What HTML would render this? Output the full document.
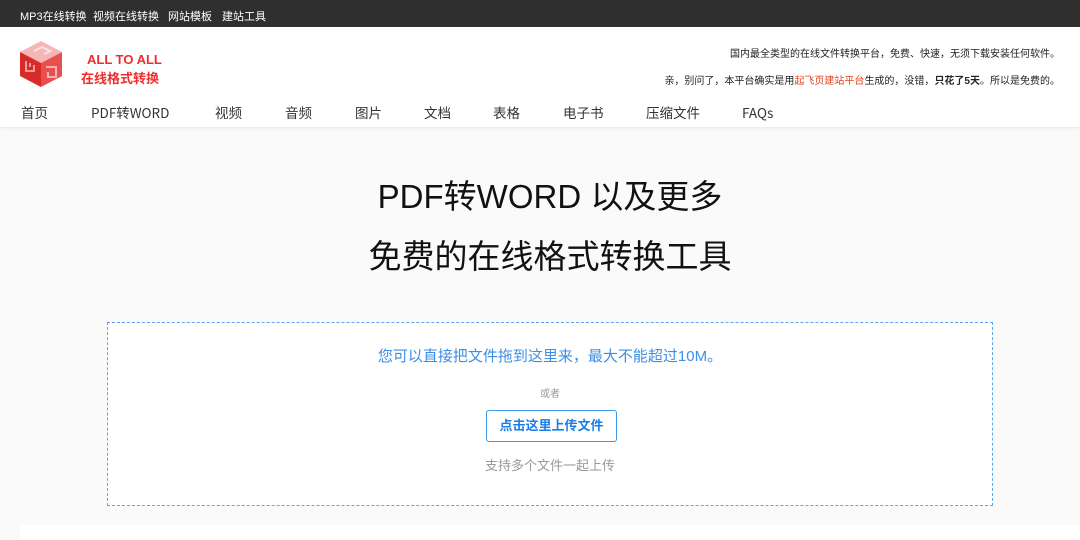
<!DOCTYPE html>
<html><head><meta charset="utf-8"><style>
*{margin:0;padding:0;box-sizing:border-box}
body{width:1080px;height:540px;overflow:hidden;background:#fafafa;font-family:"Liberation Sans","Noto Sans CJK SC",sans-serif;color:#333;position:relative}
.top{position:absolute;left:0;top:0;width:1080px;height:27px;background:#2f2f2f;color:#fff;font-size:11px}
.top span{position:absolute;top:8px}
.head{position:absolute;left:0;top:27px;width:1080px;height:101px;background:#fff;border-bottom:1px solid #eee;box-shadow:0 1px 3px rgba(0,0,0,.04)}
.lt{position:absolute;color:#ee2d2d;font-weight:bold;font-size:13px}
.r{position:absolute;right:20px;font-size:10px;color:#222;white-space:nowrap}
.nav span{position:absolute;top:75px;height:20px;line-height:20px;font-size:13.5px;color:#333;font-family:"Noto Sans CJK SC","Liberation Sans",sans-serif}
.t{position:absolute;left:10px;width:1080px;text-align:center;font-size:33px;color:#111}
.box{position:absolute;left:107px;top:322px;width:886px;height:184px;border:1px dashed #5aa6f0;background:#fff}
.c{position:absolute;width:100%;text-align:center}
.btn{position:absolute;left:378px;top:87px;width:131px;height:32px;border:1px solid #3e97ee;border-radius:3px;color:#1a7ee8;font-weight:bold;font-size:13px;text-align:center;line-height:30px}
.bot{position:absolute;left:20px;top:525px;width:1060px;height:15px;background:#fff}
</style></head><body>
<div class="top"><span style="left:20px">MP3在线转换</span><span style="left:93px">视频在线转换</span><span style="left:168px">网站模板</span><span style="left:222px">建站工具</span></div>
<div class="head">
<svg style="position:absolute;left:18px;top:12px" width="46" height="50" viewBox="0 0 46 50">
<polygon points="23,2 44,13 23,24 2,13" fill="#f6b6b6"/>
<polygon points="2,13 23,24 23,48 2,37" fill="#d92a2a"/>
<polygon points="44,13 23,24 23,48 44,37" fill="#e85050"/>
<path d="M8,22v10h8v-6M12,24v4" stroke="#f49a9a" stroke-width="2" fill="none"/>
<path d="M28,28h10v10h-8v-5" stroke="#f9b0b0" stroke-width="2" fill="none"/>
<path d="M16,12l8-4l8,4l-6,3" stroke="#fff" stroke-opacity=".6" stroke-width="2" fill="none"/>
</svg>
<div class="lt" style="left:87px;top:25px">ALL TO ALL</div>
<div class="lt" style="left:81px;top:41px">在线格式转换</div>
<div class="r" style="top:18px">国内最全类型的在线文件转换平台，免费、快速，无须下载安装任何软件。</div>
<div class="r" style="top:45px">亲，别问了，本平台确实是用<span style="color:#e4431c">起飞页建站平台</span>生成的，没错，<b>只花了5天</b>。所以是免费的。</div>
<div class="nav"><span style="left:21px">首页</span><span style="left:91px">PDF转WORD</span><span style="left:215px">视频</span><span style="left:285px">音频</span><span style="left:355px">图片</span><span style="left:424px">文档</span><span style="left:493px">表格</span><span style="left:563px">电子书</span><span style="left:646px">压缩文件</span><span style="left:742px">FAQs</span></div>
</div>
<div class="t" style="top:170px">PDF转WORD 以及更多</div>
<div class="t" style="top:230px">免费的在线格式转换工具</div>
<div class="box">
<div class="c" style="top:22px;font-size:15px;color:#3d8ee6">您可以直接把文件拖到这里来，最大不能超过10M。</div>
<div class="c" style="top:62px;font-size:10px;color:#999">或者</div>
<div class="btn">点击这里上传文件</div>
<div class="c" style="top:132px;font-size:13px;color:#999">支持多个文件一起上传</div>
</div>
<div class="bot"></div>
</body></html>
